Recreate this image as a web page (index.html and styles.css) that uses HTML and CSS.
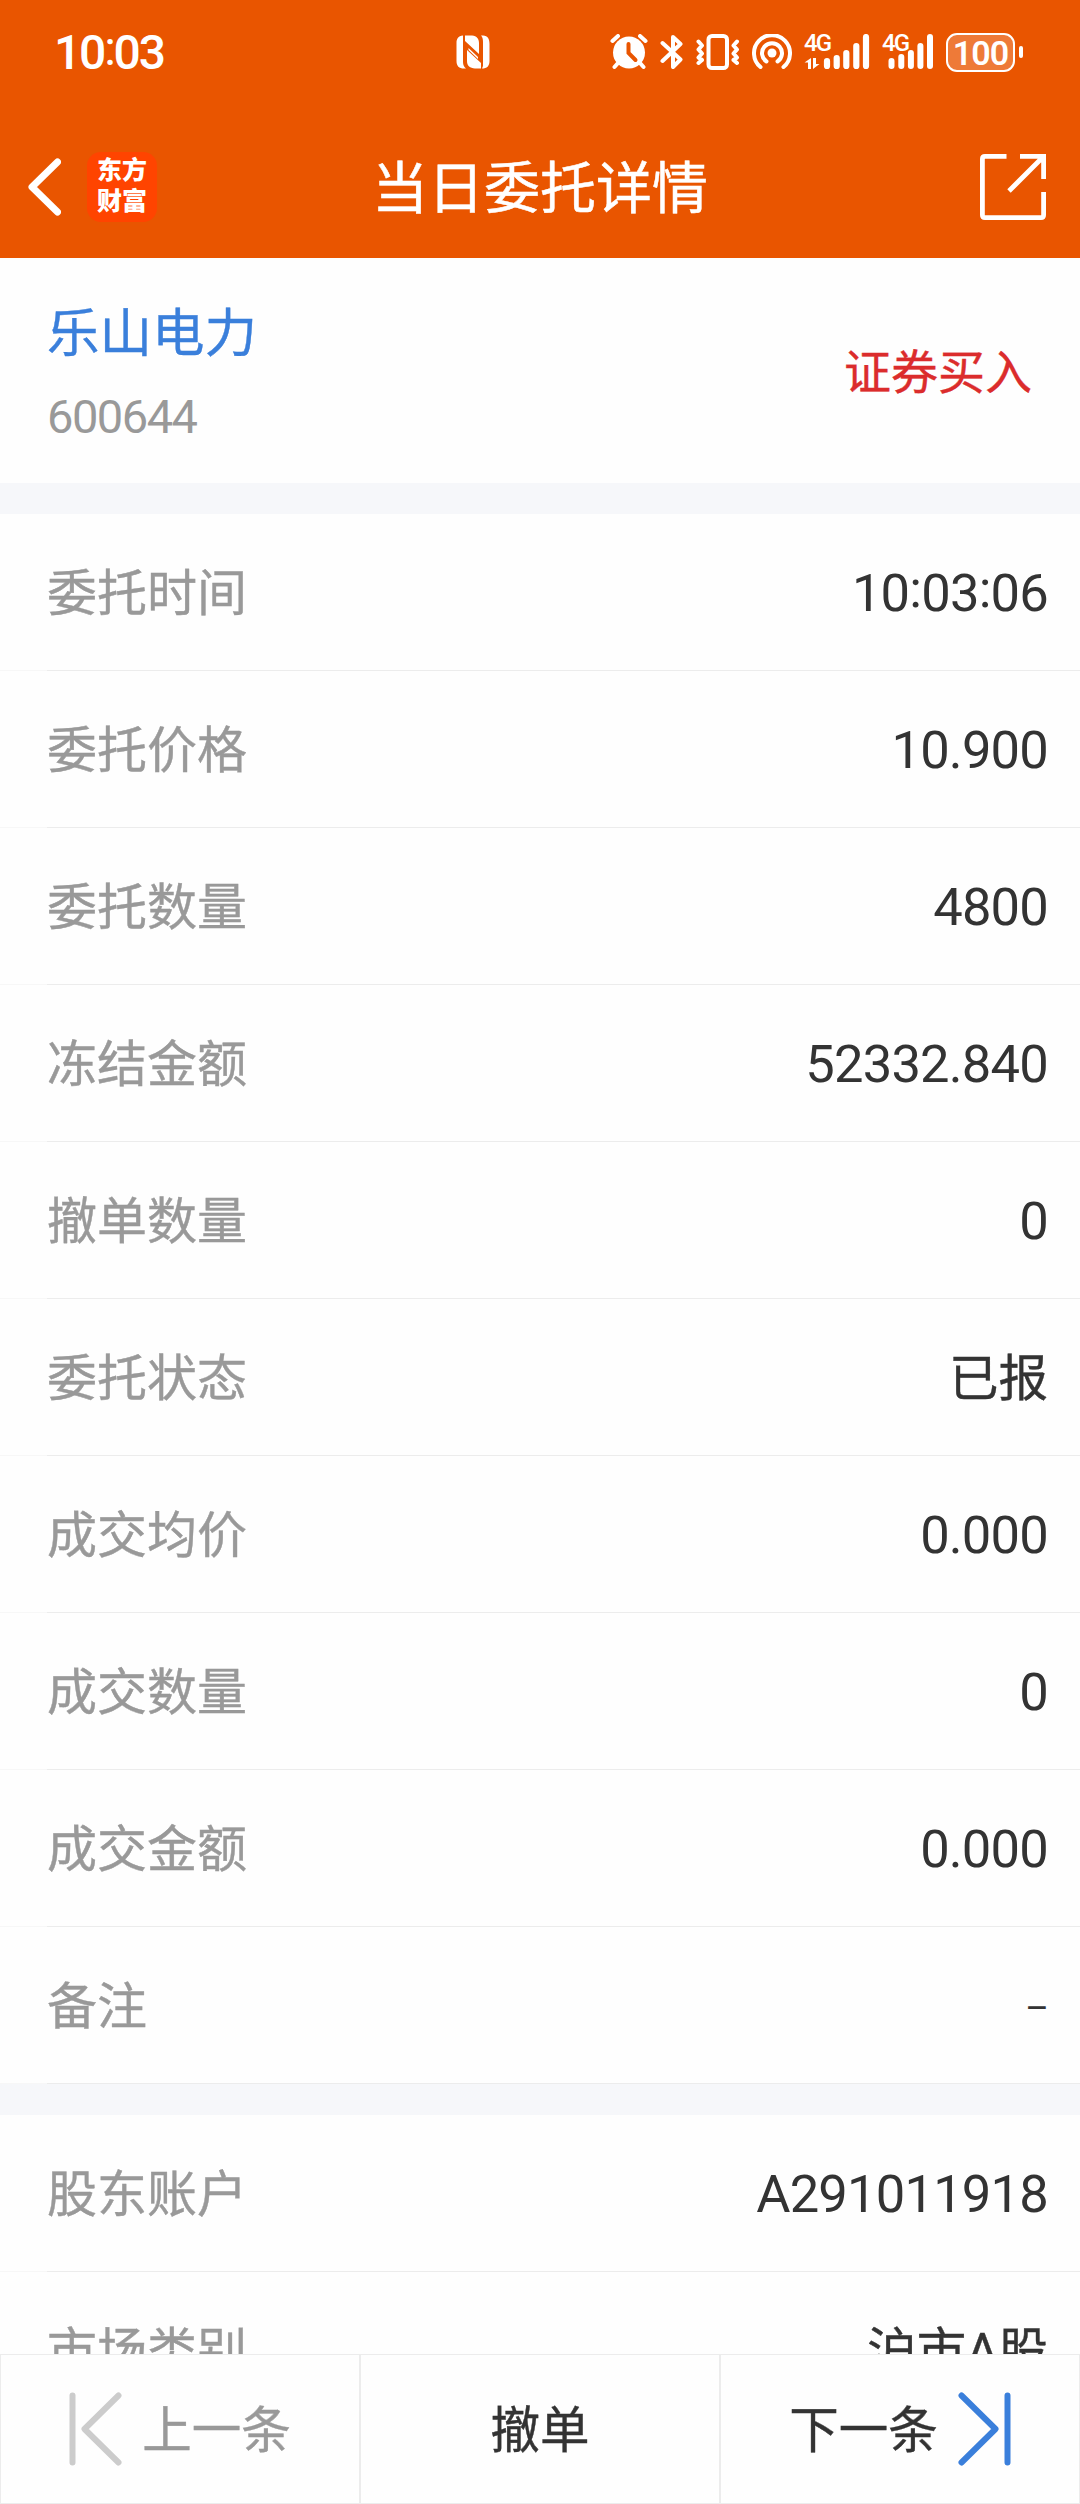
FILE: index.html
```
<!DOCTYPE html>
<html lang="zh-CN">
    <head>
        <meta charset="UTF-8">
        <title>当日委托详情</title>
        <link rel="stylesheet" href="styles.css">
    </head>
    <body>
        <div class="page">
            <div class="header">
                <div class="status">
                    <div class="time">10<i>:</i>03</div>
                    <svg class="nfc" width="34" height="34" viewBox="0 0 34 34">
                        <path fill="#fff" d="M7 0.5C2 1 0.500 4 0.500 8V26C0.500 31 3 33.500 8 33.500H10C8 32 7 30 7 27ZM9 0.500H16C21 1 23 4 23 8V19L9 6ZM25 0.500H27C32 1 33.500 4 33.500 9V26C33.500 31 31 33.500 26 33.500L27 31V7C27 4 26.500 2 25 0.500ZM11 15L25 28V33.500H19C14 33 11 31 11 26ZM12.500 13L22 22V24L12.500 15Z"/>
                    </svg>
                    <div class="icons">
                        <svg class="alarm" width="38" height="36" viewBox="0 0 38 36">
                            <circle cx="19" cy="18.500" r="16" fill="#fff"/>
                            <path d="M2.500 7L8 2M35.500 7L30 2M8 29L4.500 33M30 29L33.500 33" stroke="#fff" stroke-width="4" stroke-linecap="round"/>
                            <path d="M18.500 10V19L25.500 26" fill="none" stroke="#e95500" stroke-width="4" stroke-linecap="round"/>
                        </svg>
                        <svg class="bluetooth" width="24" height="36" viewBox="0 0 24 36">
                            <path d="M2.500 9L20.500 25.500L13 33V3L20.500 10L2.500 27" fill="none" stroke="#fff" stroke-width="4" stroke-linecap="round" stroke-linejoin="round"/>
                        </svg>
                        <svg class="vibrate" width="44" height="36" viewBox="0 0 44 36">
                            <rect x="12.500" y="2" width="18.500" height="32" rx="3.500" fill="none" stroke="#fff" stroke-width="4"/>
                            <path d="M2.500 7.500L6 11.500L2.500 15.500L6 19.500L2.500 23.500L6 26L2.500 29M41 7.500L37.500 11.500L41 15.500L37.500 19.500L41 23.500L37.500 26L41 29" fill="none" stroke="#fff" stroke-width="4" stroke-linecap="round" stroke-linejoin="round"/>
                        </svg>
                        <svg class="hotspot" width="40" height="36" viewBox="0 0 40 36">
                            <circle cx="20" cy="19" r="4.500" fill="#fff"/>
                            <path d="M14.500 27.500A10 10 0 1 1 25.500 27.500M8.500 33A18 18 0 1 1 31.500 33" fill="none" stroke="#fff" stroke-width="4" stroke-linecap="round"/>
                        </svg>
                        <div class="signal">
                            <span class="net">4G</span>
                            <svg width="67" height="36" viewBox="0 0 67 36">
                                <path d="M0.500 28.500L7 24V35H4V28.500ZM9 24H12V30H15.500L9 35Z" fill="#fff"/>
                                <path d="M23 27V32M32.700 24V32M42.300 19V32M52.300 12V32M62 3V32" stroke="#fff" stroke-width="6.200" stroke-linecap="round"/>
                            </svg>
                        </div>
                        <div class="signal second">
                            <span class="net">4G</span>
                            <svg width="52" height="36" viewBox="0 0 52 36">
                                <path d="M9.500 27V32M19.300 23V32M28.900 19V32M38.400 12V32M48 3V32" stroke="#fff" stroke-width="6" stroke-linecap="round"/>
                            </svg>
                        </div>
                        <div class="battery">100</div>
                        <div class="nub"></div>
                    </div>
                </div>
                <div class="nav">
                    <div class="nav-left">
                        <svg width="36" height="58" viewBox="0 0 36 58">
                            <path d="M32.500 4L7 29L32.500 54" fill="none" stroke="#fff" stroke-width="7" stroke-linecap="round" stroke-linejoin="round"/>
                        </svg>
                        <div class="logo">东方<br>财富</div>
                    </div>
                    <h1>当日委托详情</h1>
                    <div class="nav-right">
                        <svg width="66" height="66" viewBox="0 0 66 66">
                            <path d="M26.500 2.400H5Q2.400 2.400 2.400 5V61Q2.400 63.600 5 63.600H61Q63.600 63.600 63.600 61V38M40 2.400H63.600V25M63 3L29 37" fill="none" stroke="#fff" stroke-width="4.800"/>
                        </svg>
                    </div>
                </div>
            </div>
            <div class="stock">
                <div>
                    <div class="name">乐山电力</div>
                    <div class="code">600644</div>
                </div>
                <div class="type">证券买入</div>
            </div>
            <ul class="list">
                <li><span>委托时间</span><b>10<i>:</i>03<i>:</i>06</b></li>
                <li><span>委托价格</span><b>10.900</b></li>
                <li><span>委托数量</span><b>4800</b></li>
                <li><span>冻结金额</span><b>52332.840</b></li>
                <li><span>撤单数量</span><b>0</b></li>
                <li><span>委托状态</span><b class="cn">已报</b></li>
                <li><span>成交均价</span><b>0.000</b></li>
                <li><span>成交数量</span><b>0</b></li>
                <li><span>成交金额</span><b>0.000</b></li>
                <li><span>备注</span><b class="dash">–</b></li>
            </ul>
            <ul class="list account">
                <li><span>股东账户</span><b>A291011918</b></li>
                <li><span>市场类别</span><b class="cn">沪市A股</b></li>
            </ul>
            <div class="footer">
                <div class="btn disabled">
                    <svg width="53" height="74" viewBox="0 0 53 74">
                        <path d="M3.500 3.500V70.500M49.500 3.500L15.500 37L49.500 70.500" fill="none" stroke="#ccc" stroke-width="6" stroke-linecap="round" stroke-linejoin="round"/>
                    </svg>
                    <span>上一条</span>
                </div>
                <div class="btn"><span>撤单</span></div>
                <div class="btn">
                    <span>下一条</span>
                    <svg width="53" height="74" viewBox="0 0 53 74">
                        <path d="M49.500 3.500V70.500M3.500 3.500L37.500 37L3.500 70.500" fill="none" stroke="#3a7fdb" stroke-width="6" stroke-linecap="round" stroke-linejoin="round"/>
                    </svg>
                </div>
            </div>
        </div>
    </body>
</html>
```
FILE: styles.css
```
*{
    margin: 0;
    padding: 0;
    box-sizing: border-box;
}
ul{
    list-style: none;
}
b,i,h1{
    font-weight: 400;
    font-style: normal;
}
/* 冒号上移，与数字居中 */
i{
    vertical-align: 4px;
    line-height: 0;
}
svg{
    display: block;
    flex: none;
}
body{
    font-family: Roboto, "Noto Sans CJK SC", sans-serif;
    background: #fefefe;
    color: #333;
}
.page{
    width: 1080px;
    height: 2504px;
    display: flex;
    flex-direction: column;
    overflow: hidden;
}
.header{
    height: 258px;
    flex: none;
    background: #e95500;
    color: #fff;
}
/* 状态栏 */
.status{
    height: 104px;
    padding: 0 57px 0 54px;
    display: flex;
    align-items: center;
}
.time{
    width: 402px;
    font-size: 48px;
    font-weight: 500;
    letter-spacing: -2.200px;
}
.icons{
    margin-left: auto;
    display: flex;
    align-items: center;
}
.bluetooth{
    margin-left: 12px;
}
.vibrate{
    margin-left: 12px;
}
.hotspot{
    margin-left: 12px;
}
.signal{
    position: relative;
    margin-left: 12px;
}
.second{
    margin-left: 11px;
}
.net{
    position: absolute;
    left: 0;
    top: -1px;
    font-size: 24px;
    line-height: 20px;
    font-weight: 500;
    letter-spacing: -2px;
}
.battery{
    width: 69px;
    height: 39px;
    margin-left: 12px;
    border: 2.500px solid #fff;
    border-radius: 11px;
    background: rgba(255,255,255,.22);
    font-size: 34px;
    line-height: 36px;
    font-weight: 600;
    text-align: center;
    letter-spacing: -1px;
}
.nub{
    width: 4px;
    height: 12px;
    margin-left: 4px;
    border-radius: 2px;
    background: #fff;
}
/* 导航 */
.nav{
    height: 166px;
    padding: 0 34px 0 25px;
    display: flex;
    align-items: center;
    justify-content: space-between;
}
.nav-left,.nav-right{
    width: 150px;
    display: flex;
    align-items: center;
}
.nav-right{
    width: 141px;
    justify-content: flex-end;
}
.logo{
    width: 70px;
    height: 70px;
    margin-left: 26px;
    padding-top: 3px;
    border-radius: 14px;
    background: #ff4400;
    font-size: 25px;
    line-height: 31px;
    font-weight: 900;
    text-align: center;
}
.nav h1{
    padding-top: 4px;
    font-size: 56px;
    line-height: 80px;
    -webkit-text-stroke: .5px;
}
/* 股票 */
.stock{
    height: 225px;
    flex: none;
    padding: 0 48px 0 47px;
    display: flex;
    justify-content: space-between;
    align-items: center;
}
.name{
    padding-top: 12px;
    color: #3a7fdb;
    font-size: 52.500px;
    line-height: 80px;
    -webkit-text-stroke: .4px;
}
.code{
    color: #999;
    font-size: 47px;
    line-height: 86px;
    letter-spacing: -1.500px;
}
.type{
    padding-bottom: 5px;
    color: #db2c2c;
    font-size: 47px;
    -webkit-text-stroke: .4px;
}
.list{
    flex: none;
    border-top: 31px solid #f6f7fa;
}
.list li{
    height: 157px;
    padding: 0 32px 0 47px;
    display: flex;
    justify-content: space-between;
    align-items: center;
    background: linear-gradient(to right, #f7f7f7 47px, #ececec 47px) bottom / 100% 1px no-repeat;
    font-size: 50px;
}
.list span{
    padding-bottom: 7px;
    color: #999;
    -webkit-text-stroke: .4px;
}
.list b{
    font-size: 52.500px;
    letter-spacing: -.800px;
}
.list .cn{
    padding-bottom: 7px;
    font-size: 49.500px;
    letter-spacing: 0;
    -webkit-text-stroke: .4px;
}
.list .dash{
    padding-top: 6px;
    font-size: 36px;
}
/* 底部按钮盖住列表 */
.footer{
    position: absolute;
    left: 0;
    top: 2354px;
    width: 1080px;
    height: 150px;
    display: flex;
    background: #fefefe;
}
.btn{
    width: 360px;
    border: 1px solid #ececec;
    display: flex;
    align-items: center;
    justify-content: center;
    gap: 20px;
    font-size: 49.500px;
}
.btn span{
    padding-bottom: 6px;
    -webkit-text-stroke: .4px;
}
.disabled{
    color: #999;
}
```
